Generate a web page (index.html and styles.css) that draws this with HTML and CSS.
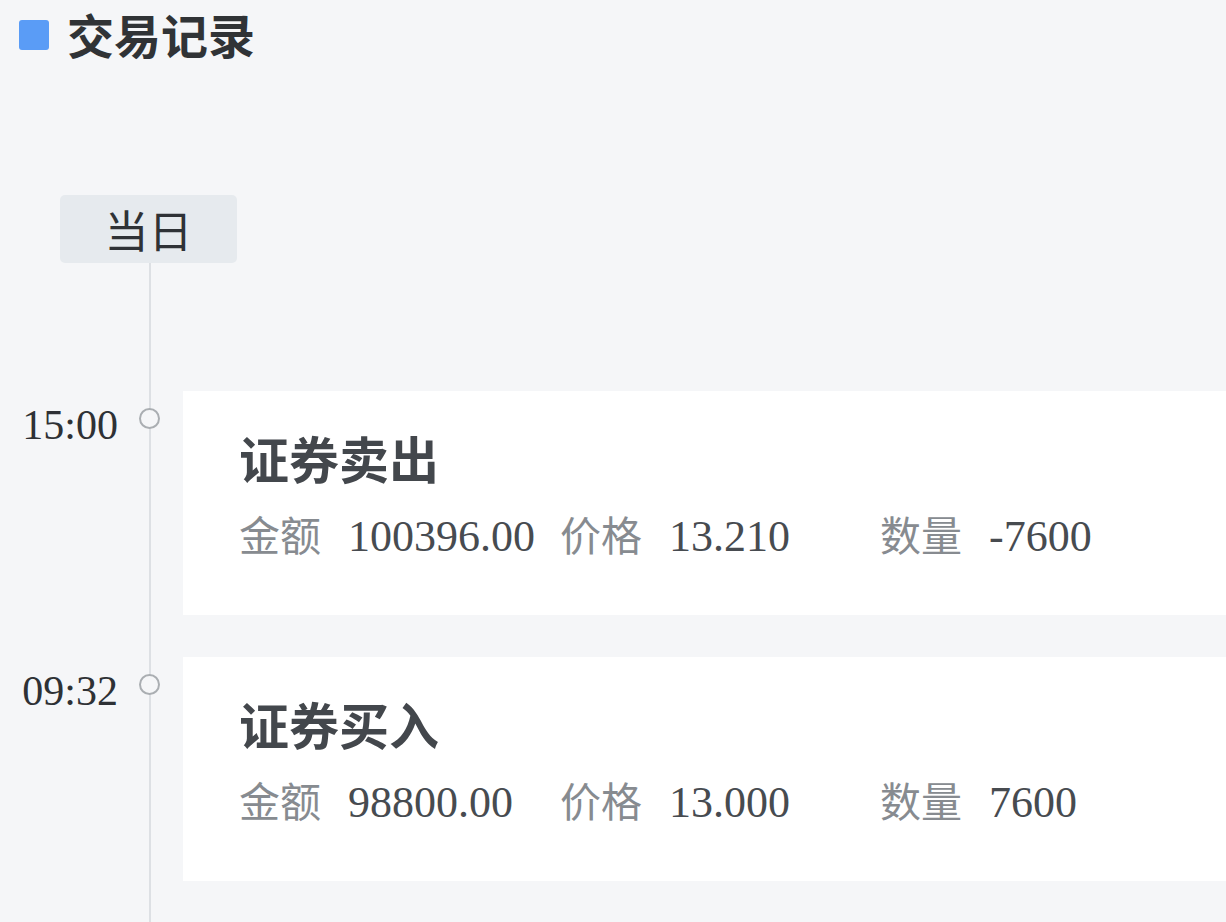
FILE: index.html
```html
<!DOCTYPE html>
<html lang="zh-CN">
<head>
  <meta charset="UTF-8" />
  <meta name="viewport" content="width=device-width, initial-scale=1.0"/>
  <title>交易记录</title>
  <link rel="stylesheet" href="styles.css">
</head>
<body>
  <div class="header">
    <span class="mark"></span>
    <h2>交易记录</h2>
  </div>

  <div class="day">当日</div>

  <div class="timeline">
    <div class="item">
      <div class="time">15:00</div>
      <div class="axis"><span class="dot"></span></div>
      <div class="card">
        <div class="card-title">证券卖出</div>
        <div class="row">
          <div class="cell"><span class="label">金额</span><span class="value">100396.00</span></div>
          <div class="cell"><span class="label">价格</span><span class="value">13.210</span></div>
          <div class="cell"><span class="label">数量</span><span class="value">-7600</span></div>
        </div>
      </div>
    </div>

    <div class="item">
      <div class="time">09:32</div>
      <div class="axis"><span class="dot"></span></div>
      <div class="card">
        <div class="card-title">证券买入</div>
        <div class="row">
          <div class="cell"><span class="label">金额</span><span class="value">98800.00</span></div>
          <div class="cell"><span class="label">价格</span><span class="value">13.000</span></div>
          <div class="cell"><span class="label">数量</span><span class="value">7600</span></div>
        </div>
      </div>
    </div>
  </div>
</body>
</html>
```

FILE: styles.css
```css
body {
  background: #f5f6f8;
  font-family: "Noto Sans CJK SC", "Noto Sans", sans-serif;
  margin: 0;
  height: 100vh;
  display: flex;
  flex-direction: column;
  overflow: hidden;
}
.header {
  display: flex;
  align-items: flex-start;
  padding-left: 19px;
  height: 68px;
}
.mark {
  margin-top: 20px;
  width: 30px;
  height: 30px;
  border-radius: 3px;
  background: #5a9cf6;
}
h2 {
  margin: 0 0 0 18px;
  font-size: 47px;
  line-height: 68px;
  font-weight: bold;
  color: #303336;
}
.day {
  margin: 127px 0 0 60px;
  width: 177px;
  height: 68px;
  line-height: 68px;
  text-align: center;
  font-size: 44px;
  color: #2f3236;
  background: #e6eaee;
  border-radius: 5px;
}
.timeline {
  position: relative;
  flex: 1;
  padding-top: 128px;
}
.timeline::before {
  content: "";
  position: absolute;
  left: 149px;
  top: 0;
  bottom: 0;
  width: 2px;
  background: #dde0e4;
}
.item {
  display: flex;
  margin-bottom: 42px;
}
.item:last-child {
  margin-bottom: 0;
}
.time {
  width: 118px;
  text-align: right;
  font-family: "Liberation Serif", serif;
  font-size: 42px;
  line-height: 1;
  padding-top: 13px;
  color: #2e3135;
}
.axis {
  position: relative;
  width: 22px;
  margin-left: 21px;
}
.dot {
  position: absolute;
  left: 0;
  top: 17px;
  width: 17px;
  height: 17px;
  border: 2.5px solid #aaaeb2;
  border-radius: 50%;
  background: #f5f6f8;
}
.card {
  flex: 1;
  margin-left: 22px;
  height: 224px;
  box-sizing: border-box;
  padding: 34px 0 0 56px;
  background: #fff;
}
.card-title {
  font-size: 50px;
  line-height: 64px;
  font-weight: bold;
  color: #43474c;
}
.row {
  display: grid;
  grid-template-columns: 321px 320px auto;
  margin-top: 14px;
}
.cell {
  display: flex;
  align-items: baseline;
  white-space: nowrap;
}
.label {
  font-size: 41px;
  color: #878b90;
}
.value {
  margin-left: 27px;
  font-family: "Liberation Serif", serif;
  font-size: 44px;
  color: #474b50;
}
```
